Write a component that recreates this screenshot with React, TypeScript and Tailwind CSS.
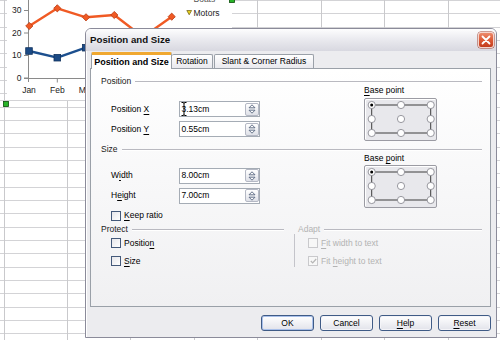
import React from "react";

const U = ({ children }: { children: React.ReactNode }) => (
  <span className="underline decoration-1 underline-offset-[1.5px]">{children}</span>
);

function Spin() {
  return (
    <div className="w-[14px] h-[13px] border border-[#b4b8c4] rounded-[2px] bg-gradient-to-b from-white to-[#dfe1e8] flex items-center justify-center">
      <svg width="8" height="10" viewBox="0 0 8 10">
        <path d="M4 0.8 L7 3.8 H1 Z" fill="#fff" stroke="#56647e" strokeWidth="0.9" />
        <path d="M1 6.2 H7 L4 9.2 Z" fill="#fff" stroke="#56647e" strokeWidth="0.9" />
      </svg>
    </div>
  );
}

function Field({ value, cursor }: { value: string; cursor?: boolean }) {
  return (
    <div className="relative w-[81px] h-[16px] border border-[#a5acb5] bg-white flex items-center justify-between pl-[1.5px] pr-[0.5px]">
      <span className="text-[8.5px] leading-none text-black">{value}</span>
      <Spin />
      {cursor && (
        <svg className="absolute left-[1px] top-[0px]" width="6" height="14" viewBox="0 0 6 14">
          <path d="M0.5 0.5 H2 Q3 0.5 3 1.5 V12.5 Q3 13.5 2 13.5 H0.5 M5.5 0.5 H4 Q3 0.5 3 1.5 M3 12.5 Q3 13.5 4 13.5 H5.5" fill="none" stroke="#000" strokeWidth="1" />
        </svg>
      )}
    </div>
  );
}

function FieldRow({ label, value, cursor }: { label: React.ReactNode; value: string; cursor?: boolean }) {
  return (
    <div className="flex items-center h-[16px]">
      <div className="w-[68px] text-[8.5px] leading-none text-black">{label}</div>
      <Field value={value} cursor={cursor} />
    </div>
  );
}

function Heading({ children, disabled }: { children: React.ReactNode; disabled?: boolean }) {
  return (
    <div className="flex items-center h-[9px]">
      <span className={`text-[8.5px] leading-[9px] ${disabled ? "text-[#b3b3b3]" : "text-[#1a1a1a]"}`}>{children}</span>
      <div className="flex-1 ml-[4px] h-[2px] border-t border-t-[#b9b9c0] border-b border-b-white" />
    </div>
  );
}

function Check({ checked, disabled }: { checked?: boolean; disabled?: boolean }) {
  return (
    <div
      className={`w-[10px] h-[10px] border flex items-center justify-center ${
        disabled ? "border-[#c9c9cc] bg-[#f7f7f7]" : "border-[#44597a] bg-gradient-to-br from-[#e6e6ea] to-white"
      }`}
    >
      {checked && (
        <svg width="7" height="6" viewBox="0 0 7 6">
          <path d="M0.8 3 L2.7 4.9 L6.2 1" fill="none" stroke={disabled ? "#b5b5b5" : "#222"} strokeWidth="1.2" />
        </svg>
      )}
    </div>
  );
}

function CheckRow({ label, checked, disabled }: { label: React.ReactNode; checked?: boolean; disabled?: boolean }) {
  return (
    <div className="flex items-center gap-[3px] h-[10px]">
      <Check checked={checked} disabled={disabled} />
      <span className={`text-[8.5px] leading-none ${disabled ? "text-[#b3b3b3]" : "text-black"}`}>{label}</span>
    </div>
  );
}

function BasePoint() {
  const xs = [6.7, 36, 65.7];
  const ys = [6, 20, 34];
  return (
    <div className="w-[73px] h-[43px] border border-[#9b9ba3] rounded-[2px] bg-[#e8e8ec] shadow-[inset_1px_1px_0_#ffffff]">
      <svg width="71" height="41" viewBox="0 0 71 41" className="block">
        <path d="M6.7 6 H65.7 V34 H6.7 Z" fill="none" stroke="#3c3c3c" strokeWidth="1" />
        {ys.map((y) =>
          xs.map((x) => (
            <circle key={`${x}-${y}`} cx={x} cy={y} r="3.6" fill="#fff" stroke="#8d8d95" strokeWidth="0.9" />
          ))
        )}
        <circle cx={6.7} cy={6} r="1.5" fill="#000" />
      </svg>
    </div>
  );
}

function Btn({ children, def }: { children: React.ReactNode; def?: boolean }) {
  return (
    <div
      className={`w-[53px] h-[16px] rounded-[3px] border border-[#3f5b86] bg-gradient-to-b from-white to-[#e2e3ea] flex items-center justify-center text-[8.5px] leading-none text-black ${
        def ? "shadow-[inset_0_0_0_1px_#a9c0ea]" : "shadow-[inset_0_0_0_1px_#f4f4f8]"
      }`}
    >
      {children}
    </div>
  );
}

function Sheet() {
  const rows: number[] = [];
  for (let k = 0; k < 27; k++) rows.push(Math.round(13.333 * k) + 0.5);
  const cols = [4, 67, 130, 194, 257, 321, 384, 448].map((c) => c + 0.5);
  const orange = [
    [29.3, 26],
    [57.3, 8.3],
    [86, 17.3],
    [114.3, 15],
    [143, 37],
    [171.7, 16.7],
  ];
  const blue = [
    [29, 51],
    [57.3, 57.7],
    [85.7, 47.7],
    [114.3, 46],
    [143, 44],
  ];
  const f = "'Liberation Sans', Arial, sans-serif";
  return (
    <svg className="absolute inset-0" width="500" height="340" viewBox="0 0 500 340">
      <rect width="500" height="340" fill="#fff" />
      {rows.map((y) => (
        <line key={`r${y}`} x1="0" x2="500" y1={y} y2={y} stroke="#d3d3d6" strokeWidth="1" />
      ))}
      {cols.map((x) => (
        <line key={`c${x}`} x1={x} x2={x} y1="0" y2="340" stroke="#c9c9cc" strokeWidth="1" />
      ))}
      <rect x="7" y="0" width="225" height="100" fill="#fff" />
      <line x1="0" x2="250" y1="100.5" y2="100.5" stroke="#d3d3d6" />
      {/* axes */}
      <line x1="28.5" x2="28.5" y1="0" y2="82" stroke="#8a8a8a" />
      <line x1="24" x2="200" y1="78.5" y2="78.5" stroke="#8a8a8a" />
      {[10.5, 33, 55.5, 78].map((y) => (
        <line key={`t${y}`} x1="24" x2="28.5" y1={y} y2={y} stroke="#8a8a8a" />
      ))}
      {[57.3, 86].map((x) => (
        <line key={`tx${x}`} x1={x} x2={x} y1="78.5" y2="82.5" stroke="#8a8a8a" />
      ))}
      <g fontFamily={f} fontSize="8.5" fill="#222">
        <text x="21.5" y="13.3" textAnchor="end">30</text>
        <text x="21.5" y="35.8" textAnchor="end">20</text>
        <text x="21.5" y="58.3" textAnchor="end">10</text>
        <text x="21.5" y="80.6" textAnchor="end">0</text>
        <text x="29" y="93" textAnchor="middle">Jan</text>
        <text x="57.3" y="93" textAnchor="middle">Feb</text>
        <text x="86" y="93" textAnchor="middle">Mar</text>
        <text x="193.5" y="15.8">Motors</text>
        <text x="193.5" y="2" fill="#555">Boats</text>
      </g>
      <polyline
        points={orange.map((p) => p.join(",")).join(" ")}
        fill="none"
        stroke="#f05a24"
        strokeWidth="2.4"
        strokeLinejoin="round"
      />
      {orange.map(([x, y]) => (
        <path
          key={`o${x}`}
          d={`M${x} ${y - 3.6} L${x + 3.6} ${y} L${x} ${y + 3.6} L${x - 3.6} ${y} Z`}
          fill="#f05a24"
          stroke="#b83a12"
          strokeWidth="0.8"
        />
      ))}
      <polyline
        points={blue.map((p) => p.join(",")).join(" ")}
        fill="none"
        stroke="#1c4f8e"
        strokeWidth="2.4"
        strokeLinejoin="round"
      />
      {blue.map(([x, y]) => (
        <rect key={`b${x}`} x={x - 3.3} y={y - 3.3} width="6.6" height="6.6" fill="#1b4a85" stroke="#12335e" strokeWidth="0.8" />
      ))}
      <path d="M186.8 10.5 H191.6 L189.2 14.8 Z" fill="#e8d21c" stroke="#6a5a10" strokeWidth="0.7" />
      <line x1="186.8" x2="191.6" y1="-1.5" y2="-1.5" stroke="#777" />
      {/* selection handles */}
      <rect x="3.5" y="101.5" width="5" height="5" fill="#28b428" stroke="#0b4d0b" strokeWidth="0.8" />
      <rect x="229.5" y="-2.5" width="5" height="5" fill="#28b428" stroke="#0b4d0b" strokeWidth="0.8" />
    </svg>
  );
}

export default function App() {
  return (
    <div className="relative w-[500px] h-[340px] overflow-hidden bg-white font-['Liberation_Sans',Arial,sans-serif]">
      <Sheet />
      <div className="absolute left-[85px] top-[28px] w-[412px] h-[310px] border border-[#8b8b9a] rounded-t-[6px] bg-[#ececef] flex flex-col overflow-hidden shadow-[inset_1px_0_0_#ffffff]">
        {/* title bar */}
        <div className="relative h-[22px] shrink-0 flex items-center pl-[4px] bg-gradient-to-b from-[#fdfdfe] via-[#e9e9ee] to-[#d8d8e0]">
          <span className="text-[9.7px] font-bold text-[#111] leading-none">Position and Size</span>
          <div className="absolute right-[2px] top-[3px] w-[16px] h-[16px] rounded-[3px] border border-[#f4d4cc] bg-gradient-to-b from-[#ec8a6c] via-[#dd5a36] to-[#c23c1c] flex items-center justify-center shadow-[0_0_0_0.5px_#a04030]">
            <svg width="10" height="10" viewBox="0 0 10 10">
              <path d="M1.5 1.5 L8.5 8.5 M8.5 1.5 L1.5 8.5" stroke="#fff" strokeWidth="1.8" strokeLinecap="round" />
            </svg>
          </div>
        </div>
        {/* tabs */}
        <div className="h-[17px] shrink-0 flex items-end pl-[5px]">
          <div className="relative z-10 -mb-px w-[81px] h-[17px] bg-white border-x border-[#9aa0a8] border-t-[3px] border-t-[#f0a830] rounded-t-[2px] flex items-center justify-center">
            <span className="text-[9px] font-bold text-black leading-none">Position and Size</span>
          </div>
          <div className="w-[41px] h-[14px] border-t border-r border-[#9aa0a8] rounded-t-[2px] bg-gradient-to-b from-white to-[#e9e9ee] flex items-center justify-center">
            <span className="text-[8.5px] leading-none text-black">Rotation</span>
          </div>
          <div className="ml-[1px] w-[100px] h-[14px] border-t border-x border-[#9aa0a8] rounded-t-[2px] bg-gradient-to-b from-white to-[#e9e9ee] flex items-center justify-center">
            <span className="text-[8.5px] leading-none text-black">Slant &amp; Corner Radius</span>
          </div>
        </div>
        {/* panel */}
        <div className="ml-[4px] w-[401px] h-[239px] shrink-0 border border-[#9aa0a8] bg-gradient-to-b from-white to-[#f0f0f2] pt-[8px] pl-[10px] pr-[8px] text-[8.5px] text-black">
          <Heading>Position</Heading>
          <div className="flex">
            <div className="w-[263px] pl-[10px] pt-[15px] flex flex-col gap-[4px]">
              <FieldRow label={<>Position <U>X</U></>} value="3.13cm" cursor />
              <FieldRow label={<>Position <U>Y</U></>} value="0.55cm" />
            </div>
            <div>
              <div className="h-[9px] leading-[9px]">
                <U>B</U>ase point
              </div>
              <div className="mt-[3px]">
                <BasePoint />
              </div>
            </div>
          </div>
          <div className="mt-[4px]">
            <Heading>Size</Heading>
          </div>
          <div className="flex">
            <div className="w-[263px] pl-[10px] pt-[13.5px] flex flex-col">
              <FieldRow label={<>W<U>i</U>dth</>} value="8.00cm" />
              <div className="mt-[4px]">
                <FieldRow label={<>H<U>e</U>ight</>} value="7.00cm" />
              </div>
              <div className="mt-[7px]">
                <CheckRow label={<><U>K</U>eep ratio</>} />
              </div>
            </div>
            <div>
              <div className="h-[9px] leading-[9px]">
                Base <U>p</U>oint
              </div>
              <div className="mt-[2px]">
                <BasePoint />
              </div>
            </div>
          </div>
          <div className="flex mt-[4.5px]">
            <div className="w-[183px]">
              <Heading>Protect</Heading>
              <div className="pl-[10px] pt-[4px] flex flex-col gap-[8px]">
                <CheckRow label={<>Positio<U>n</U></>} />
                <CheckRow label={<><U>S</U>ize</>} />
              </div>
            </div>
            <div className="ml-[10px] flex-1">
              <div className="pl-[4px]">
                <Heading disabled>Adapt</Heading>
              </div>
              <div className="border-l border-[#c4c4ca] pl-[13px] pt-[4px] pb-[1px] flex flex-col gap-[8px]">
                <CheckRow disabled label={<><U>F</U>it width to text</>} />
                <CheckRow disabled checked label={<>Fit <U>h</U>eight to text</>} />
              </div>
            </div>
          </div>
        </div>
        {/* buttons */}
        <div className="mt-[8px] flex justify-end gap-[6px] pr-[5px]">
          <Btn def>OK</Btn>
          <Btn>Cancel</Btn>
          <Btn>
            <U>H</U>elp
          </Btn>
          <Btn>
            <U>R</U>eset
          </Btn>
        </div>
      </div>
    </div>
  );
}
